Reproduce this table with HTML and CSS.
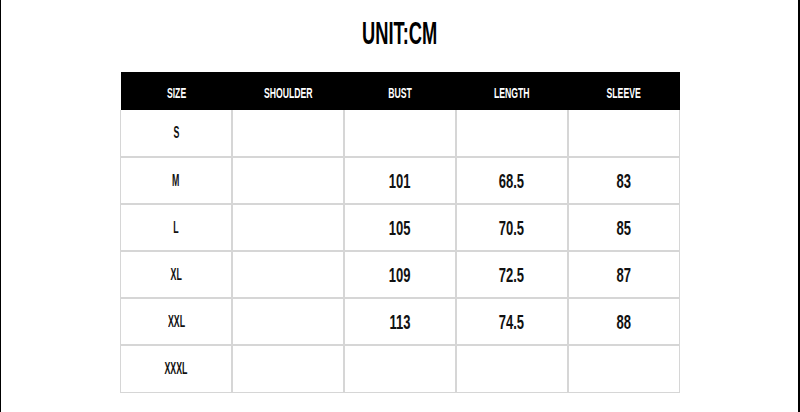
FILE: index.html
```html
<!DOCTYPE html>
<html>
<head>
<meta charset="utf-8">
<link rel="stylesheet" href="styles.css">
</head>
<body>
<div class="page">
  <h1 class="title"><span class="squeeze">UNIT:CM</span></h1>
  <table class="chart">
    <thead>
      <tr>
        <th><span class="squeeze">SIZE</span></th>
        <th><span class="squeeze">SHOULDER</span></th>
        <th><span class="squeeze">BUST</span></th>
        <th><span class="squeeze">LENGTH</span></th>
        <th><span class="squeeze">SLEEVE</span></th>
      </tr>
    </thead>
    <tbody>
      <tr><td class="size"><span class="squeeze">S</span></td><td></td><td></td><td></td><td></td></tr>
      <tr><td class="size"><span class="squeeze">M</span></td><td></td><td><span class="squeeze">101</span></td><td><span class="squeeze">68.5</span></td><td><span class="squeeze">83</span></td></tr>
      <tr><td class="size"><span class="squeeze">L</span></td><td></td><td><span class="squeeze">105</span></td><td><span class="squeeze">70.5</span></td><td><span class="squeeze">85</span></td></tr>
      <tr><td class="size"><span class="squeeze">XL</span></td><td></td><td><span class="squeeze">109</span></td><td><span class="squeeze">72.5</span></td><td><span class="squeeze">87</span></td></tr>
      <tr><td class="size"><span class="squeeze">XXL</span></td><td></td><td><span class="squeeze">113</span></td><td><span class="squeeze">74.5</span></td><td><span class="squeeze">88</span></td></tr>
      <tr><td class="size"><span class="squeeze">XXXL</span></td><td></td><td></td><td></td><td></td></tr>
    </tbody>
  </table>
</div>
</body>
</html>
```
FILE: styles.css
```css
html, body {
  margin: 0;
  padding: 0;
  background: #fff;
}
body {
  font-family: "Liberation Sans", Arial, sans-serif;
  font-weight: bold;
  color: #000;
}
.page {
  box-sizing: border-box;
  width: 800px;
  height: 412px;
  border-left: 1px solid #000;
  border-right: 2px solid #000;
  display: flex;
  flex-direction: column;
  align-items: center;
  overflow: hidden;
}
.squeeze {
  display: inline-block;
  transform: scaleX(0.62);
  transform-origin: center;
}
.title {
  margin: 15px 0 0;
  height: 57px;
  font-size: 31px;
  line-height: 38px;
  font-weight: bold;
}
.title .squeeze {
  transform: scaleX(0.59);
}
.chart {
  width: 560px;
  border-collapse: collapse;
  table-layout: fixed;
  margin-left: 1px;
}
.chart th {
  background: #000;
  color: #fff;
  height: 38px;
  padding: 4px 0 0;
  font-size: 14px;
  box-sizing: border-box;
  text-align: center;
  vertical-align: middle;
}
.chart td {
  height: 47px;
  box-sizing: border-box;
  padding: 0;
  border: 2px solid #d6d6d6;
  text-align: center;
  vertical-align: middle;
  font-size: 21px;
  color: #111;
}
.chart tbody tr:first-child td { border-top: none; }
.chart td.size {
  font-size: 16px;
  border-left-width: 1px;
}
.chart td.size .squeeze {
  transform: scaleX(0.55);
}
.chart td:last-child { border-right-width: 1px; }
.chart tbody tr:last-child td { border-bottom-width: 1px; }
```
